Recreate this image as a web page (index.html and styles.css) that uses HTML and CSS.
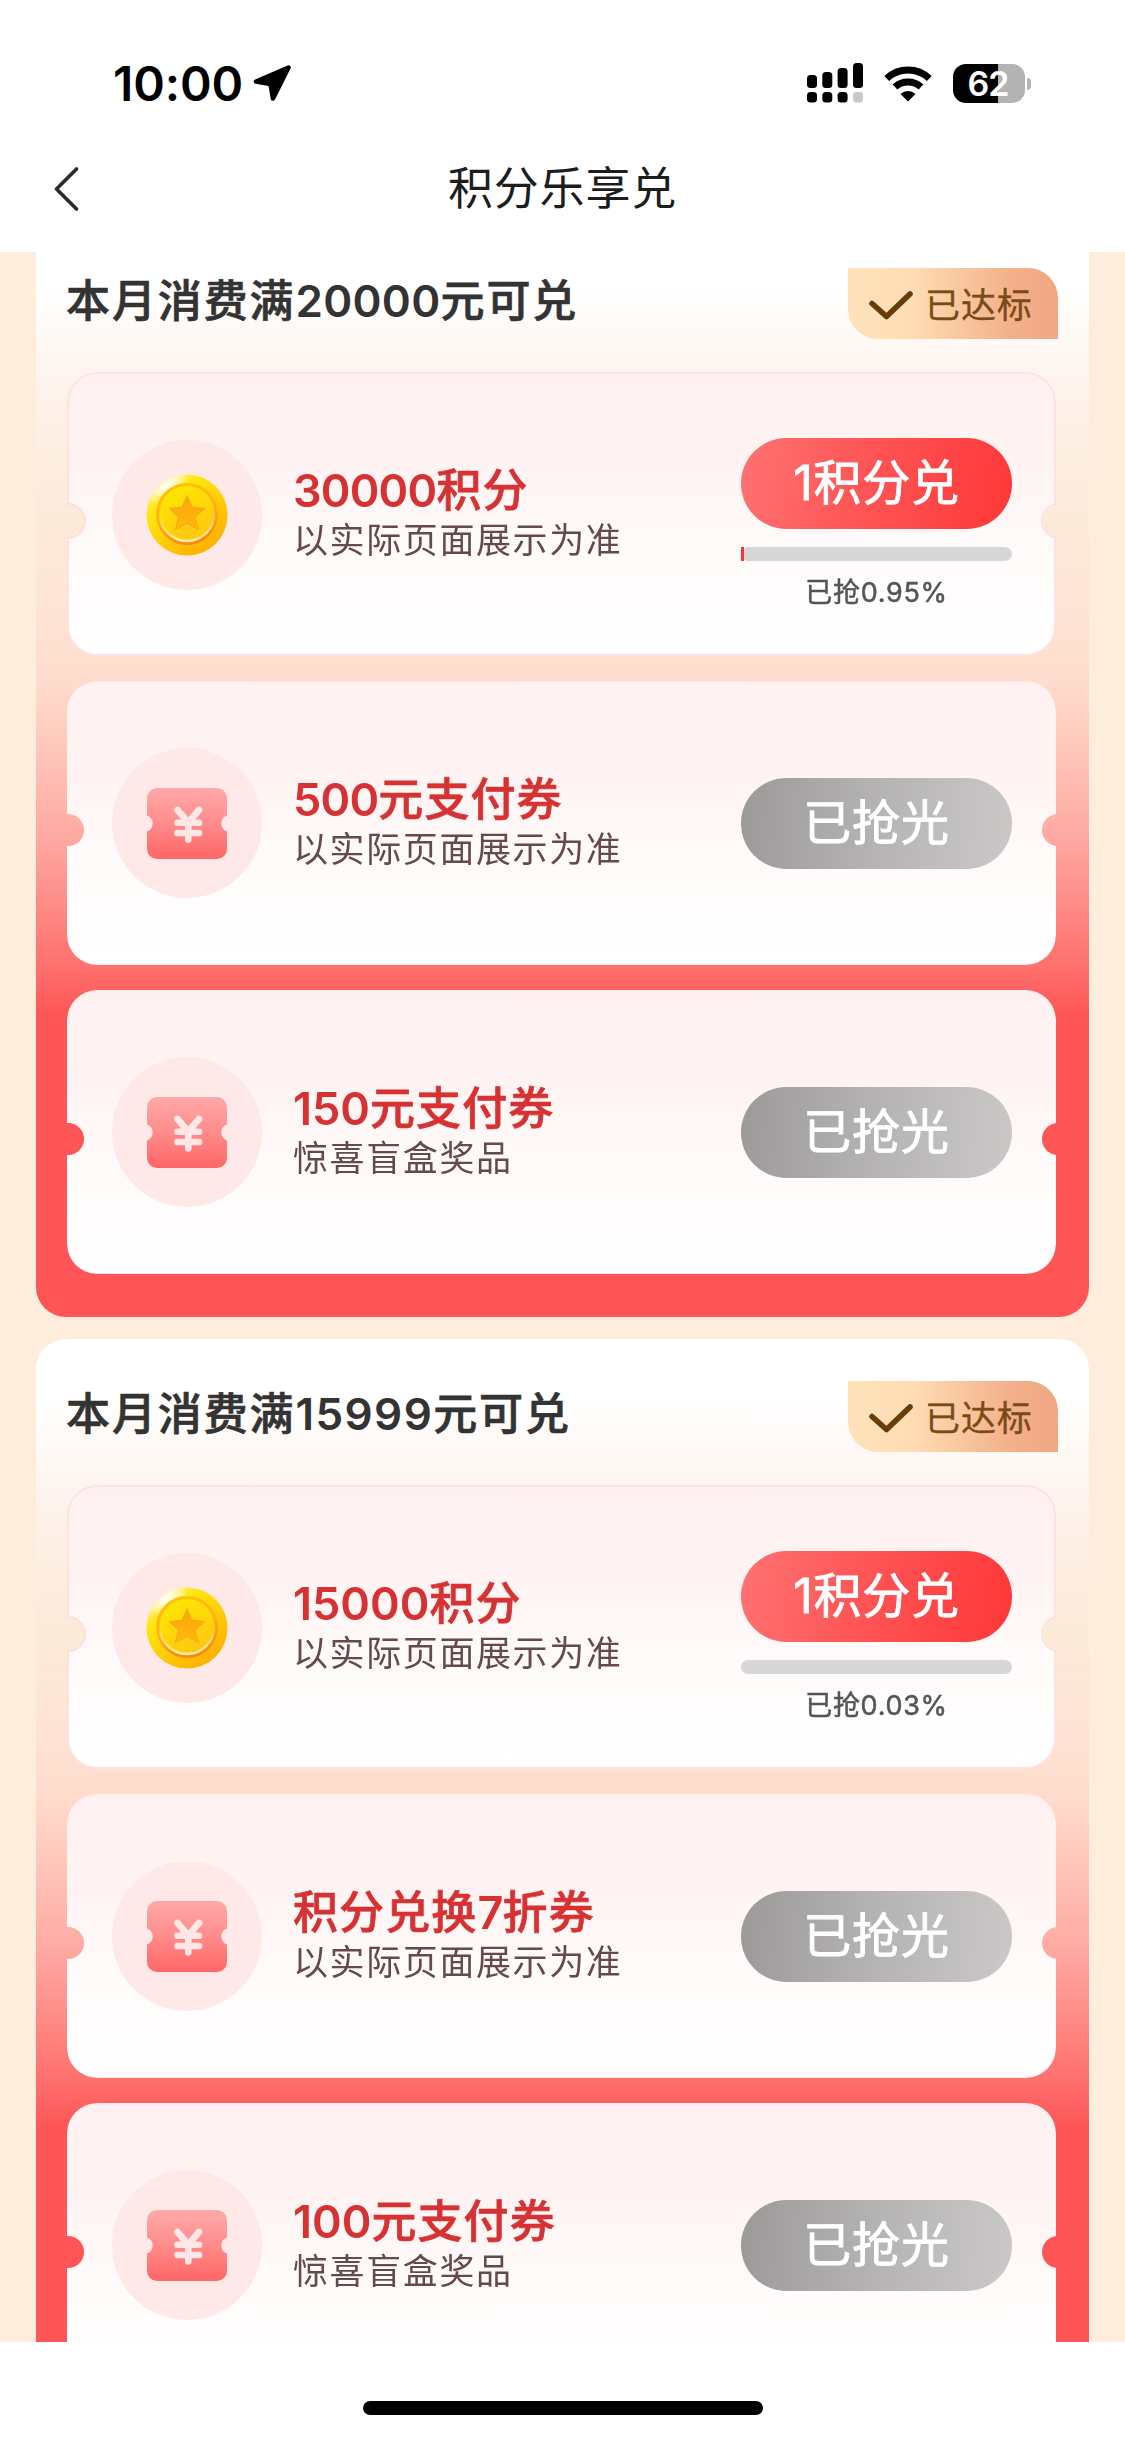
FILE: index.html
```html
<!DOCTYPE html>
<html lang="zh-CN">
<head>
<meta charset="utf-8">
<title>积分乐享兑</title>
<link rel="stylesheet" href="styles.css">
</head>
<body>
<svg class="defs" width="0" height="0" aria-hidden="true">
  <defs>
    <linearGradient id="rim" x1="0.1" y1="0.05" x2="0.8" y2="0.95">
      <stop offset="0" stop-color="#fff6a0"/><stop offset="0.28" stop-color="#ffe60c"/><stop offset="1" stop-color="#ffae00"/>
    </linearGradient>
    <linearGradient id="ring" x1="0.3" y1="0" x2="0.6" y2="1">
      <stop offset="0" stop-color="#ffc40a"/><stop offset="0.5" stop-color="#ffb213"/><stop offset="1" stop-color="#fb8117"/>
    </linearGradient>
    <linearGradient id="face" x1="0.2" y1="0" x2="0.7" y2="1">
      <stop offset="0" stop-color="#ffe800"/><stop offset="1" stop-color="#ffc512"/>
    </linearGradient>
    <linearGradient id="lip" x1="0" y1="0" x2="0" y2="1">
      <stop offset="0.45" stop-color="#fff0a0" stop-opacity="0"/><stop offset="1" stop-color="#fff0a0"/>
    </linearGradient>
    <linearGradient id="star" x1="0" y1="0" x2="0" y2="1">
      <stop offset="0" stop-color="#f8a808"/><stop offset="1" stop-color="#ffb70d"/>
    </linearGradient>
    <radialGradient id="shine"><stop offset="0" stop-color="#fff"/><stop offset="0.3" stop-color="#fff" stop-opacity="0.75"/><stop offset="1" stop-color="#fff" stop-opacity="0"/></radialGradient>
    <clipPath id="coinclip"><circle cx="41" cy="41" r="40.5"/></clipPath>
    <linearGradient id="pink" x1="0" y1="0" x2="0" y2="1">
      <stop offset="0" stop-color="#ffa9a8"/><stop offset="0.45" stop-color="#ff8f8e"/><stop offset="1" stop-color="#ff6665"/>
    </linearGradient>
    <symbol id="coin" viewBox="0 0 82 82">
      <circle cx="41" cy="41" r="40.5" fill="url(#rim)"/>
      <g clip-path="url(#coinclip)"><ellipse cx="21" cy="12" rx="25" ry="12" transform="rotate(-35 21 12)" fill="url(#shine)"/></g>
      <circle cx="41" cy="40" r="31" fill="url(#ring)"/>
      <circle cx="41" cy="39.5" r="27.5" fill="url(#face)" stroke="url(#lip)" stroke-width="2.5"/>
      <path fill="url(#star)" stroke="#f8a912" stroke-width="1" stroke-linejoin="round" d="M41 21.500l5 11.500 13 1.500-9.800 8.500 3.300 12.500L41 49.500 29.500 55.500l3-12.500L23 34.500 36 33z"/>
    </symbol>
    <symbol id="voucher" viewBox="0 0 80 71">
      <path fill="url(#pink)" d="M10 0h60a10 10 0 0 1 10 10v17.500a8.500 8.500 0 0 0 0 16V61a10 10 0 0 1-10 10H10A10 10 0 0 1 0 61V43.500a8.500 8.500 0 0 0 0-16V10A10 10 0 0 1 10 0z"/>
      <path fill="none" stroke="#ffe7e7" stroke-width="6.600" stroke-linecap="round" stroke-linejoin="round" d="M30.500 22l10.800 12.500L52 22M30.500 34.700h21.500M30.500 45h21.500M41.300 35v16.500"/>
    </symbol>
    <symbol id="check" viewBox="0 0 44 30">
      <path fill="none" stroke="#693d08" stroke-width="5.600" stroke-linecap="round" stroke-linejoin="round" d="M3 13.500L17.500 26.500 41 4"/>
    </symbol>
  </defs>
</svg>

<header class="top">
  <div class="status">
    <span class="time">10:00</span>
    <svg class="locate" width="38" height="38" viewBox="0 0 38 38"><path d="M35.500 2.500L3 16.500 17.500 19 20 33.500z" stroke="#000" stroke-width="4.500" stroke-linejoin="round"/></svg>
    <svg class="signal" width="57" height="40" viewBox="0 0 57 40">
      <rect x="0" y="12" width="10" height="13" rx="3.500"/><rect x="15.300" y="9" width="10" height="16" rx="3.500"/><rect x="30.600" y="5" width="10" height="20" rx="3.500"/><rect x="46" y="0" width="10" height="25" rx="3.500"/>
      <rect x="0" y="29" width="10" height="10.500" rx="3.500"/><rect x="15.300" y="29" width="10" height="10.500" rx="3.500"/><rect x="30.600" y="29" width="10" height="10.500" rx="3.500"/><rect x="46" y="29" width="10" height="10.500" rx="3.500" fill="#c9c9c9"/>
    </svg>
    <svg class="wifi" width="48" height="36" viewBox="0 0 48 36">
      <path d="M2.700 12.500A31 31 0 0 1 45.300 12.500M11 21A19.500 19.500 0 0 1 37 21" fill="none" stroke="#000" stroke-width="7"/>
      <path d="M24 35.500L16.500 28a11 11 0 0 1 15 0z"/>
    </svg>
    <div class="battery"><span class="level">62</span></div>
  </div>
  <nav class="nav">
    <svg class="back" width="26" height="44" viewBox="0 0 26 44"><path d="M23.500 2L3.500 22 23.500 42" fill="none" stroke="#2b2b2b" stroke-width="3.600" stroke-linecap="round" stroke-linejoin="round"/></svg>
    <h1>积分乐享兑</h1>
  </nav>
</header>

<main class="feed">
  <section class="panel">
    <div class="head"><h2>本月消费满<span class="num">20000</span>元可兑</h2><div class="badge"><svg width="44" height="30"><use href="#check"/></svg><span>已达标</span></div></div>
    <div class="cards">
      <article class="card open">
        <div class="icon"><svg width="82" height="82"><use href="#coin"/></svg></div>
        <div class="info"><h3><span class="num">30000</span>积分</h3><p>以实际页面展示为准</p></div>
        <div class="action"><button class="btn">1积分兑</button><div class="bar"><i style="width:0.95%"></i></div><small>已抢0.95%</small></div>
      </article>
      <article class="card">
        <div class="icon"><svg width="80" height="71"><use href="#voucher"/></svg></div>
        <div class="info"><h3><span class="num">500</span>元支付券</h3><p>以实际页面展示为准</p></div>
        <div class="action"><button class="btn sold">已抢光</button></div>
      </article>
      <article class="card">
        <div class="icon"><svg width="80" height="71"><use href="#voucher"/></svg></div>
        <div class="info"><h3><span class="num loose">150</span>元支付券</h3><p>惊喜盲盒奖品</p></div>
        <div class="action"><button class="btn sold">已抢光</button></div>
      </article>
    </div>
  </section>
  <section class="panel">
    <div class="head"><h2>本月消费满<span class="num loose">15999</span>元可兑</h2><div class="badge"><svg width="44" height="30"><use href="#check"/></svg><span>已达标</span></div></div>
    <div class="cards">
      <article class="card open">
        <div class="icon"><svg width="82" height="82"><use href="#coin"/></svg></div>
        <div class="info"><h3><span class="num loose">15000</span>积分</h3><p>以实际页面展示为准</p></div>
        <div class="action"><button class="btn">1积分兑</button><div class="bar"></div><small>已抢0.03%</small></div>
      </article>
      <article class="card">
        <div class="icon"><svg width="80" height="71"><use href="#voucher"/></svg></div>
        <div class="info"><h3>积分兑换<span class="num">7</span>折券</h3><p>以实际页面展示为准</p></div>
        <div class="action"><button class="btn sold">已抢光</button></div>
      </article>
      <article class="card">
        <div class="icon"><svg width="80" height="71"><use href="#voucher"/></svg></div>
        <div class="info"><h3><span class="num loose">100</span>元支付券</h3><p>惊喜盲盒奖品</p></div>
        <div class="action"><button class="btn sold">已抢光</button></div>
      </article>
    </div>
  </section>
</main>

<footer class="home"><div class="pill"></div></footer>
</body>
</html>
```
FILE: styles.css
```css
* { box-sizing: border-box; margin: 0; padding: 0; }
body {
  width: 1125px;
  height: 2439px;
  overflow: hidden;
  display: flex;
  flex-direction: column;
  background: #fff;
  font-family: Inter, "Noto Sans CJK SC", sans-serif;
}
svg { display: block; flex: none; }
.defs { position: absolute; }

.top { height: 252px; flex: none; background: #fff; }
.status { height: 126px; padding: 60px 93px 0 113px; display: flex; align-items: flex-start; }
.time { width: 140px; font-size: 48px; line-height: 48px; font-weight: 600; letter-spacing: -0.1px; white-space: nowrap; }
.locate { margin-top: 5px; }
.signal { margin: 3px 0 0 516px; }
.wifi { margin: 6px 0 0 20px; }
.battery {
  margin: 4px 0 0 21px;
  width: 72px;
  height: 39px;
  border-radius: 13px;
  background: linear-gradient(90deg, #000 45px, #b3b3b3 45px);
  position: relative;
}
.battery::after { content: ""; position: absolute; left: 74px; top: 14px; width: 4px; height: 12px; border-radius: 0 4px 4px 0; background: #b3b3b3; }
.level { display: block; padding-right: 2px; text-align: center; color: #fff; font-size: 34px; line-height: 39px; font-weight: 600; letter-spacing: -1px; }
.nav { height: 126px; display: grid; grid-template-columns: 120px 1fr 120px; }
.back { margin: 41px 0 0 53px; }
.nav h1 { text-align: center; color: #1d1d1d; font-size: 45px; line-height: 126px; font-weight: 400; letter-spacing: 0.8px; }

.feed { height: 2090px; flex: none; overflow: hidden; background: #feeddc; padding: 0 36px; }
.panel {
  height: 1091px;
  margin-bottom: 22px;
  padding: 42px 33px 0 31px;
  border-radius: 30px;
  background: linear-gradient(180deg, #fff 0, #fff 60px, #fff5f0 146px, #fdefe3 214px, #fcead9 294px, #fee4d5 384px, #ffdccd 456px, #ffaca4 604px, #ff716f 738px, #ff5556 790px);
}
.panel:first-child { margin-top: -26px; }
.head { margin: 0 -2px 0 -1px; height: 104px; display: flex; justify-content: space-between; align-items: flex-start; }
.head h2 { color: #333; font-size: 44px; line-height: 66px; font-weight: 500; letter-spacing: 1.9px; white-space: nowrap; -webkit-text-stroke: 0.7px #333; }
.num { font-weight: 600; -webkit-text-stroke: 0; }
.head .num { letter-spacing: 0.3px; }
.head .loose { letter-spacing: 1.4px; }
.badge {
  width: 210px;
  height: 71px;
  padding-left: 21px;
  display: flex;
  align-items: center;
  gap: 12px;
  border-radius: 0 30px 0 30px;
  background: linear-gradient(90deg, #ffe2bb 0, #ffddb4 30%, #f3b08a 78%, #f1a783 100%);
}
.badge svg { margin-top: 2px; }
.badge span { padding-top: 4px; color: #7a4b16; font-size: 35px; line-height: 67px; letter-spacing: 0.9px; white-space: nowrap; -webkit-text-stroke: 0.3px #7a4b16; }
.cards { display: grid; grid-auto-rows: 284px; gap: 25px; }
.card {
  position: relative;
  display: grid;
  grid-template-columns: 150px 1fr 271px;
  padding: 0 44px 0 45px;
  column-gap: 31px;
  align-items: start;
  border-radius: 30px;
  background: linear-gradient(180deg, #fff1f1 0, #fff4f3 35%, #fffbfb 65%, #fff 100%);
  border: solid #ffeaea;
  border-width: 1px 0;
  mask: radial-gradient(circle 16px at 1px 149px, #0000 15.500px, #000 16.500px), radial-gradient(circle 16px at 991px 149px, #0000 15.500px, #000 16.500px);
  mask-composite: intersect;
}
.card.open { border: 2px solid #ffe1e1; padding: 0 42px 0 43px; }
.card.open::before, .card.open::after { content: ""; position: absolute; top: 129px; left: -19px; width: 36px; height: 36px; border-radius: 50%; background: #ffdedd; }
.card.open::after { left: auto; right: -23px; }
.icon { width: 150px; height: 150px; margin-top: 66px; border-radius: 50%; background: #ffe8e8; display: flex; align-items: center; justify-content: center; }
.info { padding-top: 92px; white-space: nowrap; }
.open .info { padding-top: 91px; }
.info h3 { color: #d73233; font-size: 45px; line-height: 52px; font-weight: 500; letter-spacing: 1.1px; -webkit-text-stroke: 0.7px #d73233; }
.info .num { letter-spacing: -0.8px; }
.info .loose { letter-spacing: 0; }
.info p { color: #66494a; font-size: 35px; line-height: 46px; letter-spacing: 1.6px; }
.action { padding-top: 96px; }
.open .action { padding-top: 64px; }
.btn {
  display: block;
  width: 271px;
  height: 91px;
  border: 0;
  border-radius: 46px;
  padding-bottom: 2px;
  color: #fff;
  font: 400 48px/89px Inter, "Noto Sans CJK SC", sans-serif;
  letter-spacing: 0.8px;
  -webkit-text-stroke: 0.9px #fff;
  background: linear-gradient(100deg, #ff7272 0, #ff5556 45%, #ff3737 100%);
}
.btn.sold { background: linear-gradient(95deg, #9c9999 0, #b5b3b3 50%, #cbc8c8 100%); }
.bar { margin-top: 18px; height: 14px; border-radius: 7px; background: #d7d7d7; }
.bar i { display: block; height: 14px; background: #ff3434; }
.action small { display: block; margin-top: 12px; color: #555; text-align: center; font-size: 27px; font-weight: 400; line-height: 40px; letter-spacing: 0.7px; -webkit-text-stroke: 0.5px #555; }

.home { height: 97px; flex: none; padding-top: 59px; background: #fff; }
.pill { width: 400px; height: 14px; margin: 0 auto; border-radius: 7px; background: #000; }
```
